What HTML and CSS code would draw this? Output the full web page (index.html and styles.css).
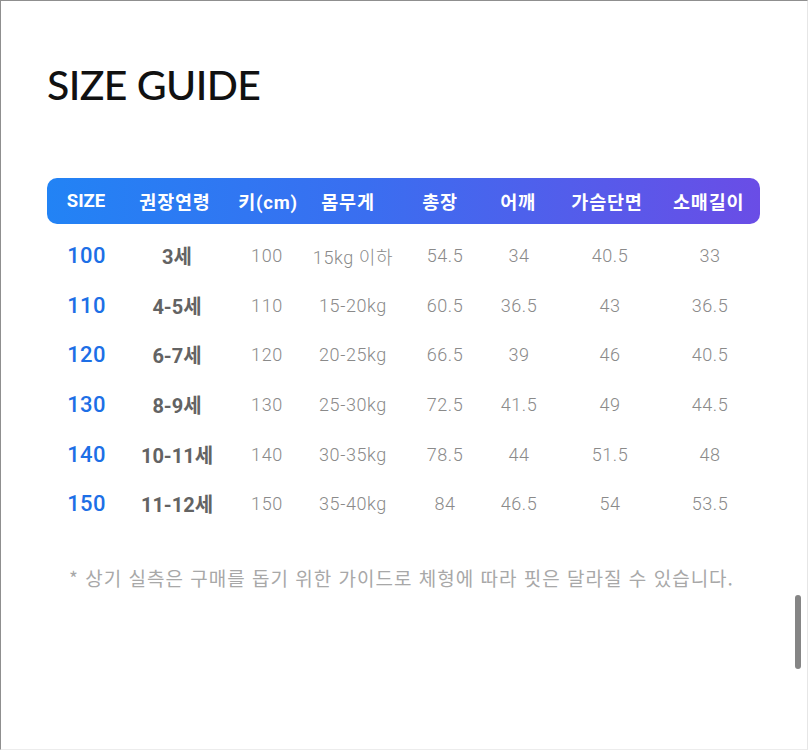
FILE: index.html
```html
<!DOCTYPE html>
<html lang="ko">
<head>
<meta charset="utf-8">
<link rel="stylesheet" href="styles.css">
</head>
<body>
<div class="frame">
  <main class="page">
    <h1 class="title">SIZE GUIDE</h1>
    <div class="table">
      <div class="head">
        <span>SIZE</span><span>권장연령</span><span>키(cm)</span><span>몸무게</span><span>총장</span><span>어깨</span><span>가슴단면</span><span>소매길이</span>
      </div>
      <div class="row"><span class="size">100</span><span class="age">3세</span><span>100</span><span>15kg 이하</span><span>54.5</span><span>34</span><span>40.5</span><span>33</span></div>
      <div class="row"><span class="size">110</span><span class="age">4-5세</span><span>110</span><span>15-20kg</span><span>60.5</span><span>36.5</span><span>43</span><span>36.5</span></div>
      <div class="row"><span class="size">120</span><span class="age">6-7세</span><span>120</span><span>20-25kg</span><span>66.5</span><span>39</span><span>46</span><span>40.5</span></div>
      <div class="row"><span class="size">130</span><span class="age">8-9세</span><span>130</span><span>25-30kg</span><span>72.5</span><span>41.5</span><span>49</span><span>44.5</span></div>
      <div class="row"><span class="size">140</span><span class="age">10-11세</span><span>140</span><span>30-35kg</span><span>78.5</span><span>44</span><span>51.5</span><span>48</span></div>
      <div class="row"><span class="size">150</span><span class="age">11-12세</span><span>150</span><span>35-40kg</span><span>84</span><span>46.5</span><span>54</span><span>53.5</span></div>
    </div>
    <p class="note">* 상기 실측은 구매를 돕기 위한 가이드로 체형에 따라 핏은 달라질 수 있습니다.</p>
  </main>
  <div class="scrollbar"></div>
</div>
</body>
</html>
```
FILE: styles.css
```css
* { box-sizing: border-box; }
html, body { margin: 0; padding: 0; background: #fff; }
body { font-family: Roboto, "Noto Sans CJK KR", sans-serif; }

.frame {
  position: relative;
  width: 808px;
  height: 750px;
  border-top: 1px solid #8f8f8f;
  border-left: 1px solid #8f8f8f;
  border-right: 1px solid #e6e6e6;
  border-bottom: 1px solid #ececec;
  overflow: hidden;
}

.page {
  padding: 59px 0 0 46px;
}

.title {
  margin: 0;
  padding-left: 0;
  font-family: Lato, "Noto Sans", sans-serif;
  font-weight: 500;
  font-size: 41px;
  line-height: 50px;
  color: #111;
  letter-spacing: -0.6px;
}

.table {
  margin-top: 68px;
  width: 713px;
}

.head {
  display: grid;
  grid-template-columns: 78px 100px 86px 74px 110px 46px 132px 66px;
  align-items: center;
  height: 46px;
  border-radius: 10px;
  background: linear-gradient(90deg, #2283f5 0%, #3a6ef0 45%, #6a4de6 100%);
  color: #fff;
  font-family: Roboto, "Noto Sans CJK KR", sans-serif;
  font-weight: 700;
  font-size: 18.5px;
  letter-spacing: 0.8px;
}
.head span { text-align: center; white-space: nowrap; }
.head span:first-child { letter-spacing: 0; }

.row {
  display: grid;
  grid-template-columns: 79px 102px 78px 94px 90px 58px 124px 76px;
  align-items: center;
  height: 49.6px;
  font-family: Roboto, "Noto Sans CJK KR", sans-serif;
  font-weight: 300;
  font-size: 18px;
  color: #8a8a8a;
  letter-spacing: 0.6px;
}
.head + .row { margin-top: 7px; }
.row span { text-align: center; white-space: nowrap; }

.row .size {
  color: #1d6fe6;
  font-weight: 500;
  font-size: 22px;
  letter-spacing: 0.3px;
}
.row .age {
  color: #636363;
  font-weight: 700;
  font-size: 20px;
  letter-spacing: 0;
}

.note {
  margin: 36px 0 0 22px;
  font-family: "Noto Sans CJK KR", sans-serif;
  font-size: 19px;
  line-height: 26px;
  color: #a8a8a8;
  letter-spacing: 1px;
}

.scrollbar {
  position: absolute;
  left: 794px;
  top: 594px;
  width: 6px;
  height: 74px;
  border-radius: 3px;
  background: #858585;
}
```
